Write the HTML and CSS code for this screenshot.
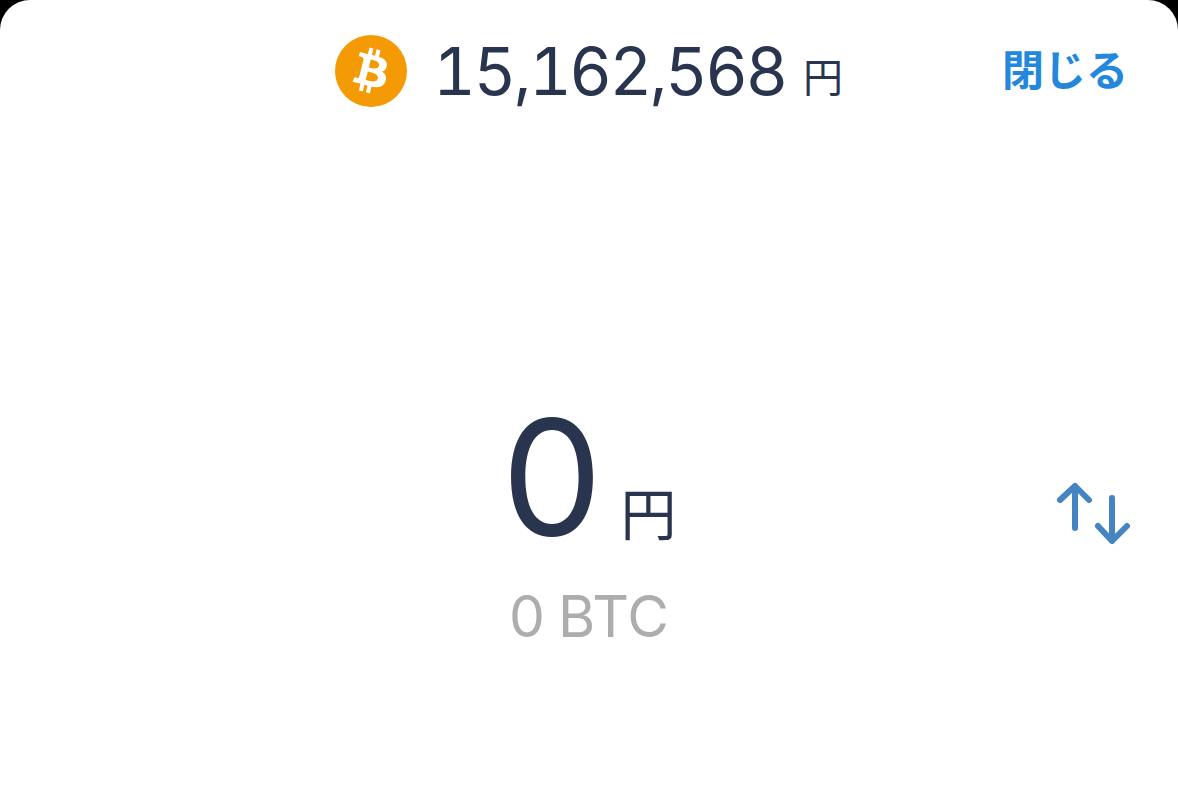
FILE: index.html
```html
<!DOCTYPE html>
<html lang="ja">
<head>
    <meta charset="UTF-8">
    <title>BTC</title>
    <link rel="stylesheet" href="styles.css">
</head>
<body>
    <div class="sheet">
        <div class="header">
            <div class="rate">
                <svg class="coin" viewBox="0 0 64 64">
                    <circle cx="32" cy="32" r="32" fill="#f39a05"/>
                    <path fill="#fff" d="M46.103 27.444c.637-4.258-2.605-6.547-7.038-8.074l1.438-5.768-3.511-.875-1.4 5.616c-.923-.23-1.871-.447-2.813-.662l1.41-5.653-3.509-.875-1.439 5.766c-.764-.174-1.514-.346-2.242-.527l.004-.018-4.842-1.209-.934 3.75s2.605.597 2.55.634c1.422.355 1.679 1.296 1.636 2.042l-1.638 6.571c.098.025.225.061.365.117l-.371-.092-2.296 9.205c-.174.432-.615 1.08-1.609.834.035.051-2.552-.637-2.552-.637l-1.743 4.019 4.569 1.139c.85.213 1.683.436 2.503.646l-1.453 5.834 3.507.875 1.439-5.772c.958.26 1.888.5 2.798.726l-1.434 5.745 3.511.875 1.453-5.823c5.987 1.133 10.489.676 12.384-4.739 1.527-4.36-.076-6.875-3.226-8.515 2.294-.529 4.022-2.038 4.483-5.155zM38.08 38.694c-1.085 4.36-8.426 2.003-10.806 1.412l1.928-7.729c2.38.594 10.012 1.77 8.878 6.317zm1.086-11.312c-.99 3.966-7.1 1.951-9.082 1.457l1.748-7.01c1.982.494 8.365 1.416 7.334 5.553z"/>
                </svg>
                <span class="rate_value">15,162,568</span>
                <span class="rate_unit">円</span>
            </div>
            <a class="close_link">閉じる</a>
        </div>

        <div class="amount_row">
            <div class="amount">
                <div class="amount_main">
                    <span class="amount_value">0</span>
                    <span class="amount_unit">円</span>
                </div>
                <div class="amount_btc">0 BTC</div>
            </div>
            <svg class="swap" viewBox="0 0 76 64" fill="none" stroke="#4484c0" stroke-width="6" stroke-linecap="round" stroke-linejoin="round">
                <path d="M20 46V4M5 18L20 4L34 18"/>
                <path d="M57 16V59M43 44L57 59L72 44"/>
            </svg>
        </div>
    </div>
</body>
</html>
```

FILE: styles.css
```css
html, body {
    margin: 0;
    height: 100%;
    background: #000;
}

body {
    font-family: "Inter", "Noto Sans CJK JP", sans-serif;
    color: #29354f;
    overflow: hidden;
}

.sheet {
    height: 789px;
    background: #fff;
    border-radius: 30px 30px 0 0;
    display: flex;
    flex-direction: column;
}

.header {
    display: grid;
    grid-template-columns: 1fr auto 1fr;
    align-items: start;
    padding: 35px 50px 0;
}

.rate {
    grid-column: 2;
    display: flex;
    align-items: center;
}

.coin {
    width: 72px;
    height: 72px;
    margin-right: 26px;
}

.rate_value {
    font-size: 66px;
    line-height: 72px;
    font-variant-numeric: tabular-nums;
    letter-spacing: -2.5px;
}

.rate_unit {
    font-size: 40px;
    margin: 8px 0 0 17px;
}

.close_link {
    grid-column: 3;
    justify-self: end;
    font-size: 42px;
    line-height: 72px;
    font-weight: 700;
    color: #2388dc;
}

.amount_row {
    display: grid;
    grid-template-columns: 1fr auto 1fr;
    align-items: center;
    margin-top: 285px;
    padding: 0 47px;
}

.amount {
    grid-column: 2;
    display: flex;
    flex-direction: column;
    align-items: center;
}

.amount_main {
    display: flex;
    align-items: baseline;
}

.amount_value {
    font-size: 160px;
    line-height: 170px;
}

.amount_unit {
    font-size: 56px;
    margin-left: 18px;
}

.amount_btc {
    font-size: 57px;
    word-spacing: -3px;
    color: #adadad;
    margin-top: 20px;
}

.swap {
    grid-column: 3;
    justify-self: end;
    width: 76px;
    height: 64px;
    margin-bottom: 16px;
}
```
